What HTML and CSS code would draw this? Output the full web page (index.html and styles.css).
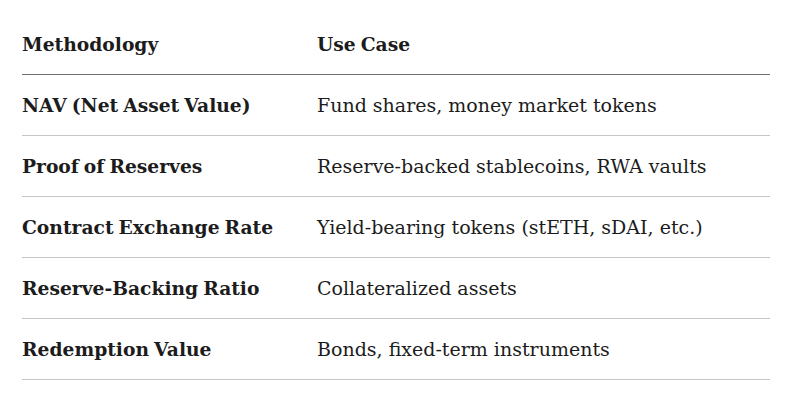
FILE: index.html
```html
<!DOCTYPE html>
<html>
<head>
<meta charset="utf-8">
<link rel="stylesheet" href="styles.css">
</head>
<body>
<div class="page">
  <table class="methods">
    <thead>
      <tr><th class="col-a">Methodology</th><th class="col-b">Use Case</th></tr>
    </thead>
    <tbody>
      <tr><td class="name">NAV (Net Asset Value)</td><td>Fund shares, money market tokens</td></tr>
      <tr><td class="name">Proof of Reserves</td><td>Reserve-backed stablecoins, RWA vaults</td></tr>
      <tr><td class="name">Contract Exchange Rate</td><td>Yield-bearing tokens (stETH, sDAI, etc.)</td></tr>
      <tr><td class="name">Reserve-Backing Ratio</td><td>Collateralized assets</td></tr>
      <tr><td class="name">Redemption Value</td><td>Bonds, fixed-term instruments</td></tr>
    </tbody>
  </table>
</div>
</body>
</html>
```
FILE: styles.css
```css
html, body {
  margin: 0;
  padding: 0;
  background: #ffffff;
}
.page {
  padding: 14px 26px 0 22px;
}
.methods {
  width: 748px;
  border-collapse: collapse;
  font-family: "DejaVu Serif", "Liberation Serif", serif;
  color: #1c1c1c;
  font-size: 19px;
}
.methods th, .methods td {
  text-align: left;
  padding: 16px 0;
  line-height: 28px;
  height: 28px;
  vertical-align: middle;
}
.methods th {
  font-weight: bold;
  border-bottom: 1px solid #707070;
}
.methods td {
  border-bottom: 1px solid #c6c6c6;
}
.col-a {
  width: 295px;
}
.methods th, .name {
  font-weight: bold;
  font-size: 18.7px;
  word-spacing: -1.5px;
}
```
